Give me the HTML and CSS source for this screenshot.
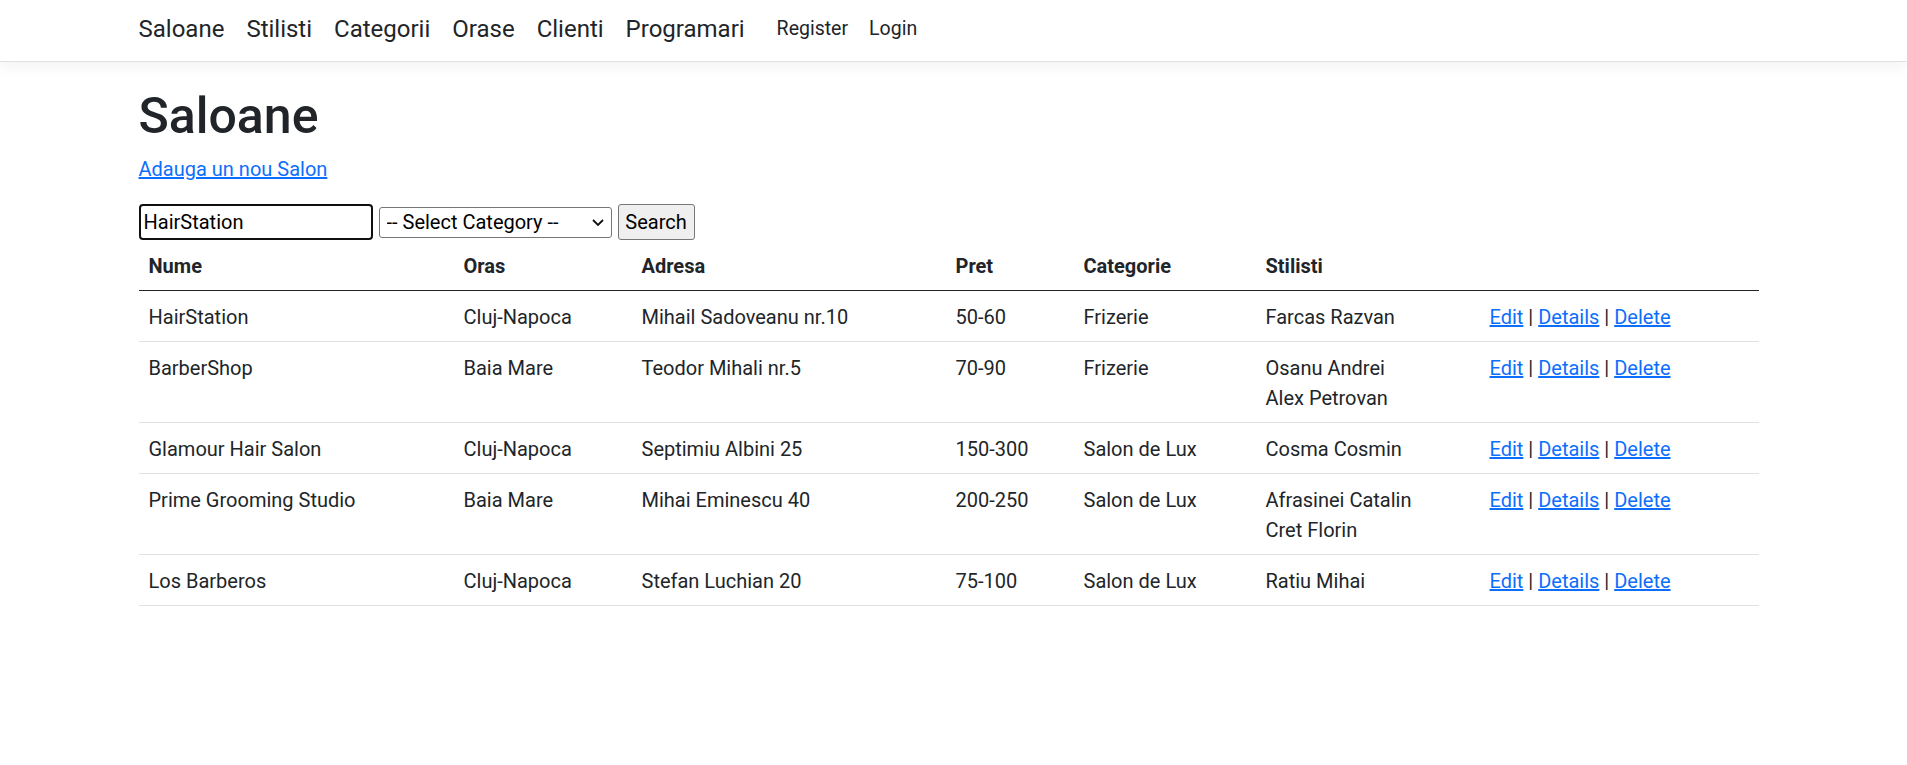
FILE: index.html
```html
<!DOCTYPE html>
<html lang="ro">
<head>
<meta charset="utf-8">
<title>Saloane</title>
<link rel="stylesheet" href="styles.css">
</head>
<body>
<header class="navbar">
  <div class="container nav-inner">
    <nav class="nav-main">
      <a href="#">Saloane</a>
      <a href="#">Stilisti</a>
      <a href="#">Categorii</a>
      <a href="#">Orase</a>
      <a href="#">Clienti</a>
      <a href="#">Programari</a>
    </nav>
    <nav class="nav-side">
      <a href="#">Register</a>
      <a href="#">Login</a>
    </nav>
  </div>
</header>
<main class="container">
  <h1 class="title">Saloane</h1>
  <p class="add-link"><a href="#">Adauga un nou Salon</a></p>
  <form class="search">
    <input class="search-input" type="text" value="HairStation">
    <span class="select-wrap">
      <select class="search-select">
        <option>-- Select Category --</option>
        <option>Frizerie</option>
        <option>Salon de Lux</option>
      </select>
      <svg class="chevron" width="12" height="7" viewBox="0 0 12 7"><path d="M1 1 L6 6 L11 1" fill="none" stroke="#111" stroke-width="1.8"/></svg>
    </span>
    <button class="search-btn" type="button">Search</button>
  </form>
  <table class="data">
    <colgroup>
      <col class="c-nume"><col class="c-oras"><col class="c-adresa"><col class="c-pret"><col class="c-cat"><col class="c-stil"><col class="c-act">
    </colgroup>
    <thead>
      <tr><th>Nume</th><th>Oras</th><th>Adresa</th><th>Pret</th><th>Categorie</th><th>Stilisti</th><th></th></tr>
    </thead>
    <tbody>
      <tr>
        <td>HairStation</td><td>Cluj-Napoca</td><td>Mihail Sadoveanu nr.10</td><td>50-60</td><td>Frizerie</td>
        <td><div>Farcas Razvan</div></td>
        <td><a href="#">Edit</a> | <a href="#">Details</a> | <a href="#">Delete</a></td>
      </tr>
      <tr>
        <td>BarberShop</td><td>Baia Mare</td><td>Teodor Mihali nr.5</td><td>70-90</td><td>Frizerie</td>
        <td><div>Osanu Andrei</div><div>Alex Petrovan</div></td>
        <td><a href="#">Edit</a> | <a href="#">Details</a> | <a href="#">Delete</a></td>
      </tr>
      <tr>
        <td>Glamour Hair Salon</td><td>Cluj-Napoca</td><td>Septimiu Albini 25</td><td>150-300</td><td>Salon de Lux</td>
        <td><div>Cosma Cosmin</div></td>
        <td><a href="#">Edit</a> | <a href="#">Details</a> | <a href="#">Delete</a></td>
      </tr>
      <tr>
        <td>Prime Grooming Studio</td><td>Baia Mare</td><td>Mihai Eminescu 40</td><td>200-250</td><td>Salon de Lux</td>
        <td><div>Afrasinei Catalin</div><div>Cret Florin</div></td>
        <td><a href="#">Edit</a> | <a href="#">Details</a> | <a href="#">Delete</a></td>
      </tr>
      <tr>
        <td>Los Barberos</td><td>Cluj-Napoca</td><td>Stefan Luchian 20</td><td>75-100</td><td>Salon de Lux</td>
        <td><div>Ratiu Mihai</div></td>
        <td><a href="#">Edit</a> | <a href="#">Details</a> | <a href="#">Delete</a></td>
      </tr>
    </tbody>
  </table>
</main>
</body>
</html>
```

FILE: styles.css
```css
* {
  box-sizing: border-box;
}

body {
  margin: 0;
  font-family: Roboto, "Segoe UI", "Liberation Sans", sans-serif;
  font-size: 20px;
  line-height: 1.5;
  color: #212529;
  background: #fff;
}

a {
  color: #0d6efd;
  text-decoration: underline;
}

.container {
  width: 1650px;
  padding: 0 15px;
  margin-left: calc(50% - 830px);
}

.navbar {
  height: 62px;
  background: #fff;
  border-bottom: 1px solid #dee2e6;
  box-shadow: 0 5px 15px rgba(0, 0, 0, 0.05);
  margin-bottom: 20px;
}

.nav-inner {
  height: 61px;
  display: flex;
  align-items: center;
  padding-bottom: 4px;
}

.nav-main {
  display: flex;
  gap: 22px;
  font-size: 24px;
}

.nav-side {
  display: flex;
  gap: 21px;
  margin-left: 32px;
  font-size: 19.5px;
}

.nav-main a,
.nav-side a {
  color: #212529;
  text-decoration: none;
}

.title {
  margin: 0 0 8px;
  padding-top: 4px;
  font-size: 50px;
  font-weight: 500;
  line-height: 1.2;
}

.add-link {
  margin: 0 0 20px;
}

.search {
  display: flex;
  align-items: center;
  height: 36px;
}

.search-input {
  width: 234px;
  height: 36px;
  border: 2px solid #101010;
  border-radius: 4px;
  padding: 0 3px;
  font-family: inherit;
  font-size: 20px;
  color: #000;
  background: #fff;
  outline: none;
}

.select-wrap {
  position: relative;
  display: inline-block;
  margin-left: 6px;
  height: 31px;
}

.search-select {
  -webkit-appearance: none;
  appearance: none;
  width: 233px;
  height: 31px;
  border: 1px solid #767676;
  border-radius: 3px;
  padding: 0 7px;
  font-family: inherit;
  font-size: 20px;
  line-height: 29px;
  color: #000;
  background: #fff;
}

.chevron {
  position: absolute;
  right: 8px;
  top: 12px;
  pointer-events: none;
}

.search-btn {
  margin-left: 6px;
  width: 77px;
  height: 36px;
  padding: 0;
  border: 1px solid #767676;
  border-radius: 3px;
  background: #efefef;
  font-family: inherit;
  font-size: 20px;
  color: #000;
}

.data {
  width: 1620px;
  border-collapse: collapse;
  table-layout: fixed;
}

.c-nume { width: 315px; }
.c-oras { width: 178px; }
.c-adresa { width: 314px; }
.c-pret { width: 128px; }
.c-cat { width: 182px; }
.c-stil { width: 224px; }
.c-act { width: 279px; }

.data th,
.data td {
  padding: 11px 10px 9px;
  text-align: left;
  vertical-align: top;
}

.data th {
  font-weight: 700;
  border-bottom: 1px solid #212529;
}

.data td {
  border-bottom: 1px solid #dee2e6;
}
```
